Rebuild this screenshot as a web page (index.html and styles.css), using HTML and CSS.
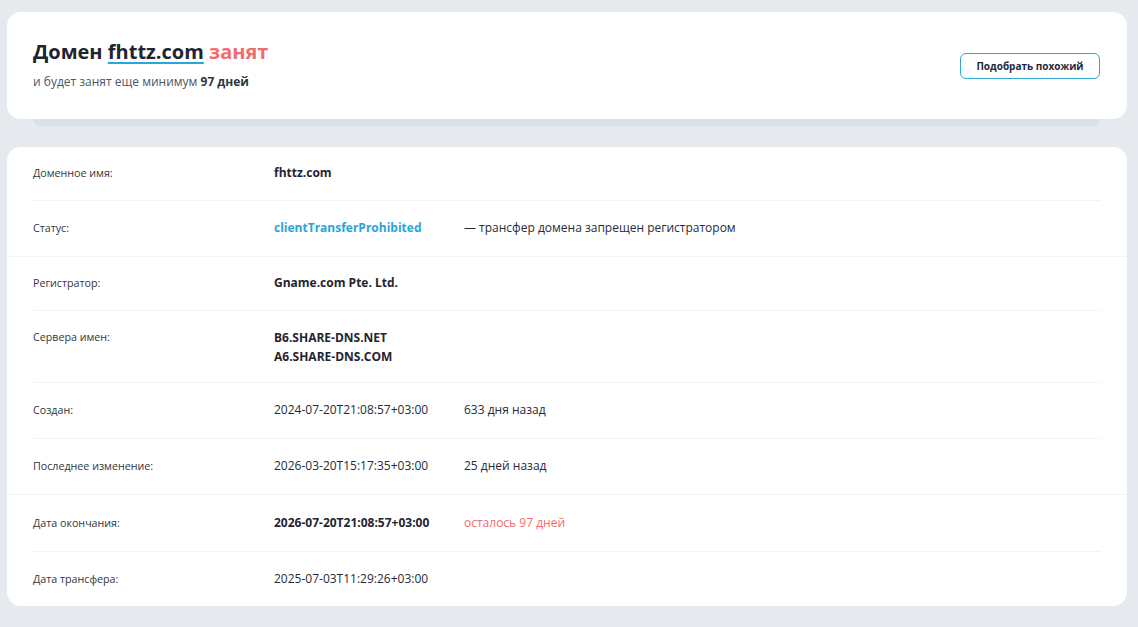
FILE: index.html
```html
<!DOCTYPE html>
<html lang="ru">
<head>
<meta charset="utf-8">
<title>Домен fhttz.com занят</title>
<link rel="stylesheet" href="styles.css">
</head>
<body>
<main class="page">
  <section class="head-card">
    <div class="head-text">
      <h1 class="title">Домен <a class="domain-link" href="#">fhttz.com</a> <span class="busy">занят</span></h1>
      <p class="subtitle">и будет занят еще минимум <b>97 дней</b></p>
    </div>
    <button class="btn-similar" type="button">Подобрать похожий</button>
  </section>
  <div class="head-shadow"></div>

  <section class="info-card">
    <div class="group">
      <div class="row row-first">
        <div class="label">Доменное имя:</div>
        <div class="value strong">fhttz.com</div>
      </div>
      <div class="row">
        <div class="label">Статус:</div>
        <div class="value status">clientTransferProhibited</div>
        <div class="note">— трансфер домена запрещен регистратором</div>
      </div>
    </div>
    <div class="group">
      <div class="row row-compact">
        <div class="label">Регистратор:</div>
        <div class="value strong">Gname.com Pte. Ltd.</div>
      </div>
      <div class="row row-ns">
        <div class="label">Сервера имен:</div>
        <div class="value strong ns">B6.SHARE-DNS.NET<br>A6.SHARE-DNS.COM</div>
      </div>
      <div class="row">
        <div class="label">Создан:</div>
        <div class="value">2024-07-20T21:08:57+03:00</div>
        <div class="note">633 дня назад</div>
      </div>
      <div class="row">
        <div class="label">Последнее изменение:</div>
        <div class="value">2026-03-20T15:17:35+03:00</div>
        <div class="note">25 дней назад</div>
      </div>
    </div>
    <div class="group">
      <div class="row row-wide">
        <div class="label">Дата окончания:</div>
        <div class="value strong">2026-07-20T21:08:57+03:00</div>
        <div class="note warn">осталось 97 дней</div>
      </div>
      <div class="row row-last">
        <div class="label">Дата трансфера:</div>
        <div class="value">2025-07-03T11:29:26+03:00</div>
      </div>
    </div>
  </section>
</main>
</body>
</html>
```

FILE: styles.css
```css
* { box-sizing: border-box; }

html, body {
  margin: 0;
  padding: 0;
  background: #e6eaee;
  font-family: "Open Sans", "Liberation Sans", sans-serif;
  color: #1f2530;
}

.page {
  padding: 12px 11px 20px 7px;
}

/* top summary card */
.head-card {
  background: #fff;
  border-radius: 14px;
  height: 107px;
  padding: 0 27px 0 26px;
  display: flex;
  align-items: center;
  justify-content: space-between;
}

.head-text { padding-bottom: 2px; }

.title {
  margin: 0;
  font-size: 20px;
  font-weight: 700;
  line-height: 26px;
  color: #1f2530;
}

.domain-link {
  color: #1f2530;
  text-decoration: underline;
  text-decoration-color: #29a7dc;
  text-decoration-thickness: 2px;
  text-underline-offset: 3px;
}

.busy { color: #f36b6d; }

.subtitle {
  margin: 9px 0 0;
  font-size: 12px;
  line-height: 16px;
  color: #4d5560;
}

.subtitle b { color: #2f3640; font-weight: 700; }

.btn-similar {
  width: 140px;
  height: 26px;
  margin-top: 1px;
  background: #fff;
  border: 1px solid #36a5d4;
  border-radius: 6px;
  font-family: inherit;
  font-size: 10px;
  font-weight: 700;
  color: #1f2a38;
  cursor: pointer;
}

/* stacked-card edge under the summary */
.head-shadow {
  height: 7px;
  margin: 0 27px 0 26px;
  background: #dce1e6;
  border-radius: 0 0 8px 8px;
}

/* details table */
.info-card {
  margin-top: 21px;
  background: #fff;
  border-radius: 14px;
}

.group + .group { border-top: 1px solid #f1f3f5; }

.row {
  display: grid;
  grid-template-columns: 241px 190px 1fr;
  margin: 0 26px;
  padding: 18px 0 19px;
  font-size: 12px;
  line-height: 18px;
}

.row + .row { border-top: 1px solid #f1f3f5; }

.row-first { padding: 17px 0 18px; }
.row-compact { padding: 17px 0 18px; }
.row-ns { padding: 17px 0 16px; }
.row-wide { padding: 19px 0 19px; }
.row-last { padding: 18px 0 18px; }

.label {
  font-size: 10.7px;
  color: #2f3640;
}

.value { color: #262c36; }

.strong { font-weight: 700; color: #1f2530; }

.ns { line-height: 19px; }

.status { font-weight: 700; color: #2ea3d8; }

.note { color: #262c36; }

.warn { color: #f26d6d; }
```
